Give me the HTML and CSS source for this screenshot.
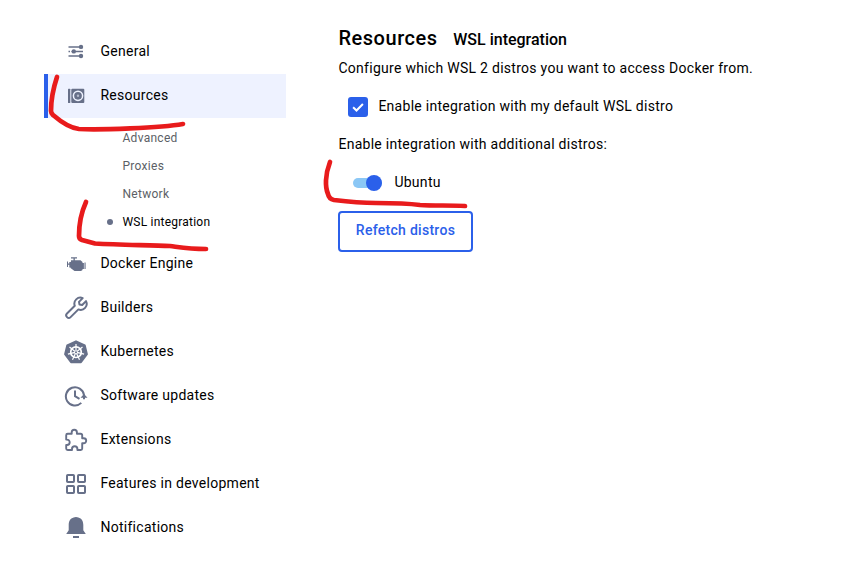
FILE: index.html
```html
<!DOCTYPE html>
<html lang="en">
<head>
<meta charset="utf-8">
<title>Settings</title>
<link rel="stylesheet" href="styles.css">
</head>
<body>
<div class="settings">
  <nav class="nav">
    <a class="item"><svg class="icon" viewBox="0 0 24 24"><g stroke="currentColor" stroke-width="1.500"><path d="M4.500 6.900h14.500M4.500 11.500h1.500M7.500 11.500h11.500M4.500 16.100h14.500"/></g><g fill="currentColor"><circle cx="17" cy="6.900" r="2.200"/><circle cx="9.800" cy="11.400" r="2.200"/><circle cx="17" cy="16" r="2.200"/></g></svg><span>General</span></a>
    <a class="item active"><svg class="icon" viewBox="0 0 24 24"><rect x="4" y="4.700" width="2.300" height="14.300" rx=".6" fill="currentColor"/><rect x="7.300" y="4.700" width="13" height="14.300" rx="1" fill="currentColor"/><circle cx="14" cy="11.800" r="4.600" fill="none" stroke="#eef2ff" stroke-width="1.500"/><circle cx="14" cy="11.800" r="1.200" fill="#b4bacb"/></svg><span>Resources</span></a>
    <div class="sub">
      <a>Advanced</a>
      <a>Proxies</a>
      <a>Network</a>
      <a class="current">WSL integration</a>
    </div>
    <a class="item"><svg class="icon" viewBox="0 0 24 24"><g fill="currentColor"><path d="M7 8.300h9.500l2 1.700v8l-1.500 1h-6.500L6.500 16z"/><path d="M7 5.300h6v1.100h-2.200V9H9.500V6.400H7zM3 9.500h1v5.500H3zM4 11.500h4v1.300H4zM5.300 10h2.200v5.500H5.300zM18 11h1.900v6H18zM20.500 10.500h1.100v6.500h-1.100z"/></g></svg><span>Docker Engine</span></a>
    <a class="item"><svg class="icon" viewBox="0 0 24 24"><path d="M22 5.100 18.200 9 15.500 8.500l-.5-2.600 3.700-3.800a6 6 0 0 0-7.900 7.700L3 17.500a2.500 2.500 0 0 0 3.600 3.600l7.800-7.700A6 6 0 0 0 22 5.100z" fill="none" stroke="currentColor" stroke-width="2" stroke-linejoin="round"/></svg><span>Builders</span></a>
    <a class="item"><svg class="icon" viewBox="0 0 24 24"><path d="M12 1.200 20.800 5.300 23 14.300 17 22.300H7L1 14.300 3.200 5.300z" fill="currentColor" stroke="currentColor" stroke-width="1.800" stroke-linejoin="round"/><g fill="none" stroke="#fff" stroke-width="1.200"><circle cx="12" cy="12.200" r="5.300" stroke-width="1.700"/><path d="M12 12.200V3.900M12 12.200l6.500-5.200M12 12.200l8.100 1.900M12 12.200l3.500 7.500M12 12.200l-3.500 7.500M12 12.200l-8.100 1.900M12 12.200l-6.500-5.200"/></g><circle cx="12" cy="12.200" r="1" fill="currentColor"/></svg><span>Kubernetes</span></a>
    <a class="item"><svg class="icon" viewBox="0 0 24 24"><g fill="none" stroke="currentColor" stroke-width="2"><path d="M17.300 18.900A9.100 9.100 0 1 1 20 11.200V15.200"/><path d="M11 6.500v5.700l4.500 2.600"/></g><path d="M16.500 13.700h7L20 10z" fill="currentColor"/></svg><span>Software updates</span></a>
    <a class="item"><svg class="icon" viewBox="0 0 24 24"><path d="M2.200 7.200Q2.200 5.700 3.700 5.700H7.700V4.300a2.600 2.600 0 0 1 5.200 0v1.400h3.700q1.600 0 1.600 1.600v3h1.500a2.500 2.500 0 0 1 0 5h-1.500v5.200q0 1.500-1.500 1.500h-3.300v-1a2.700 2.700 0 0 0-5.400 0v1H3.700q-1.500 0-1.500-1.500V17h.8a2.700 2.700 0 0 0 0-5.400h-.8z" fill="none" stroke="currentColor" stroke-width="1.900" stroke-linejoin="round"/></svg><span>Extensions</span></a>
    <a class="item"><svg class="icon" viewBox="0 0 24 24"><g fill="none" stroke="currentColor" stroke-width="2"><rect x="3" y="3" width="7" height="7" rx=".8"/><rect x="14" y="3" width="7" height="7" rx=".8"/><rect x="3" y="14" width="7" height="7" rx=".8"/><rect x="14" y="14" width="7" height="7" rx=".8"/></g></svg><span>Features in development</span></a>
    <a class="item"><svg class="icon" viewBox="0 0 24 24"><path d="M12 1c1 0 1.800.2 2.300.6 3.600 1 5 3.800 5 7.500v5.100l2.500 3.800H2.200l2.500-3.800V9.100c0-3.700 1.400-6.500 5-7.500.5-.4 1.300-.6 2.300-.6zM9 20h6v1.900H9z" fill="currentColor"/></svg><span>Notifications</span></a>
  </nav>
  <main class="content">
    <header class="head"><h1>Resources</h1><h2>WSL integration</h2></header>
    <p class="intro">Configure which WSL 2 distros you want to access Docker from.</p>
    <label class="check"><span class="box"><svg viewBox="0 0 20 20"><path d="M5.100 10.300 8.500 13.500 14.900 7" fill="none" stroke="#fff" stroke-width="2"/></svg></span><span>Enable integration with my default WSL distro</span></label>
    <p class="more">Enable integration with additional distros:</p>
    <label class="toggle"><span class="track"></span><span>Ubuntu</span></label>
    <button class="refetch">Refetch distros</button>
  </main>
  <svg class="marks" viewBox="0 0 855 569"><path d="M57 77C54 86 51 99 51 111Q51 113 53 115C60 121 69 128 79 129C100 130 160 128 183 124"/><path d="M86 202C81 213 79 225 79 236Q79 239 82 240L95 243.500C120 245 150 245 170 246C185 248 190 249 206 249"/><path d="M330 162C325 175 325 187 328 194Q329 199 334 200C350 202 365 203 376 203C390 203 405 203 420 205C435 206 450 205 465 206"/></svg>
</div>
</body>
</html>
```
FILE: styles.css
```css
* { box-sizing: border-box; }
body { margin: 0; background: #fff; color: #000; font: 14px/20px Roboto, sans-serif; letter-spacing: .28px; }
h1, h2, p { margin: 0; }
.settings { position: relative; display: flex; width: 855px; height: 569px; overflow: hidden; }
.nav { width: 242px; margin-left: 44px; padding-top: 30px; flex: none; }
.item { display: flex; align-items: center; gap: 12.400px; height: 44px; padding: 0 0 2px 16px; border-left: 4px solid transparent; }
.item .icon { position: relative; top: 1px; }
.active { background: #eef2ff; border-color: #2b60ea; }
.icon { width: 24px; height: 24px; color: #677089; flex: none; }
.sub { padding: 6px 0 6px 78.500px; }
.sub a { display: flex; align-items: center; height: 28px; font-size: 12px; color: #5c5f66; letter-spacing: .28px; }
.sub .current { color: #000; letter-spacing: .22px; }
.current::before { content: ""; width: 6px; height: 6px; margin: 0 9.500px 0 -15.500px; border-radius: 50%; background: #677089; }
.content { margin-left: 52.400px; padding-top: 24px; }
.head { display: flex; align-items: baseline; gap: 15.600px; height: 34px; }
h1 { font-size: 20px; line-height: 28px; font-weight: 500; letter-spacing: .54px; }
h2 { font-size: 16px; line-height: 24px; font-weight: 500; letter-spacing: 0; }
.check { display: flex; align-items: center; gap: 10.400px; height: 20px; margin: 18px 0 18px 9.600px; }
.box { width: 20px; height: 20px; margin-top: 2px; border-radius: 3px; background: #2b60ea; }
.box svg { display: block; }
.toggle { display: flex; align-items: center; gap: 12.400px; height: 20px; margin: 18px 0 0 14.600px; }
.track { position: relative; width: 29px; height: 10px; margin-top: 2px; border-radius: 5px; background: #8bc7f5; }
.track::after { content: ""; position: absolute; right: 0; top: -3px; width: 16px; height: 16px; border-radius: 50%; background: #2b60ea; }
.refetch { display: block; width: 135px; height: 41px; margin: 19px 0 0 -.4px; padding: 0 0 3px; border: 2px solid #2b60ea; border-radius: 4px; background: #fff; color: #2b60ea; font: 500 14px/20px Roboto, sans-serif; letter-spacing: .28px; }
.marks { position: absolute; inset: 0; width: 855px; height: 569px; fill: none; stroke: #e81b1c; stroke-width: 4.700px; stroke-linecap: round; stroke-linejoin: round; pointer-events: none; }
```
